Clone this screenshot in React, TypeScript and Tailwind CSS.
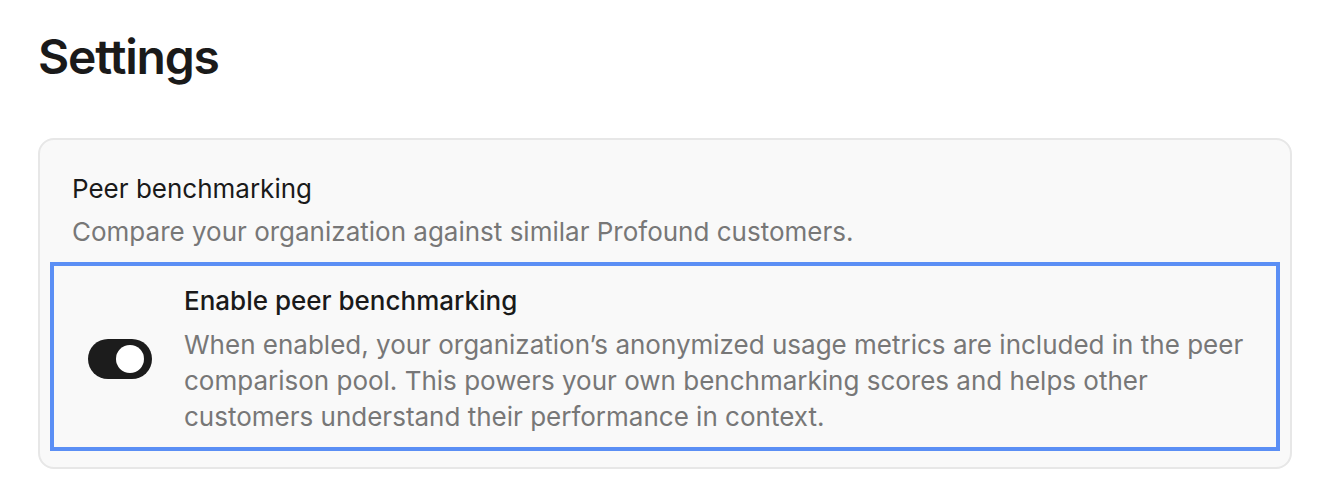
export default function App() {
  return (
    <main
      className="min-h-screen bg-white px-[38px] pt-[27px] text-[#1a1a1a]"
      style={{ fontFamily: "Inter, 'Noto Sans', sans-serif" }}
    >
      {/* Header */}
      <h1 className="text-[48px] font-semibold leading-[60px] tracking-tight">Settings</h1>

      {/* Card */}
      <section className="mt-[51px] rounded-[16px] border-2 border-[#e7e7e7] bg-[#f9f9f9] px-[32px] pt-[31px] pb-[16px]">
        <h2 className="text-[26px] leading-[36px] font-normal text-[#1a1a1a]">Peer benchmarking</h2>
        <p className="mt-[7px] text-[26px] leading-[36px] text-[#777777]">
          Compare your organization against similar Profound customers.
        </p>

        {/* Toggle row */}
        <div className="mx-[-22px] mt-[12px] flex items-center gap-[32px] border-4 border-[#5b8ff5] pl-[34px] pr-[16px] pt-[17px] pb-[12px]">
          <button
            type="button"
            role="switch"
            aria-checked="true"
            className="flex h-[40px] w-[64px] shrink-0 items-center justify-end rounded-full bg-[#1c1c1c] pr-[8px]"
          >
            <span className="block h-[28px] w-[28px] rounded-full bg-white" />
          </button>
          <div className="min-w-0 flex-1">
            <h3 className="text-[26px] leading-[36px] font-medium text-[#1a1a1a]">Enable peer benchmarking</h3>
            <p className="mt-[8px] text-[26px] leading-[36px] text-[#777777]">
              When enabled, your organization’s anonymized usage metrics are included in the peer comparison pool.
              This powers your own benchmarking scores and helps other customers understand their performance in
              context.
            </p>
          </div>
        </div>
      </section>
    </main>
  );
}
